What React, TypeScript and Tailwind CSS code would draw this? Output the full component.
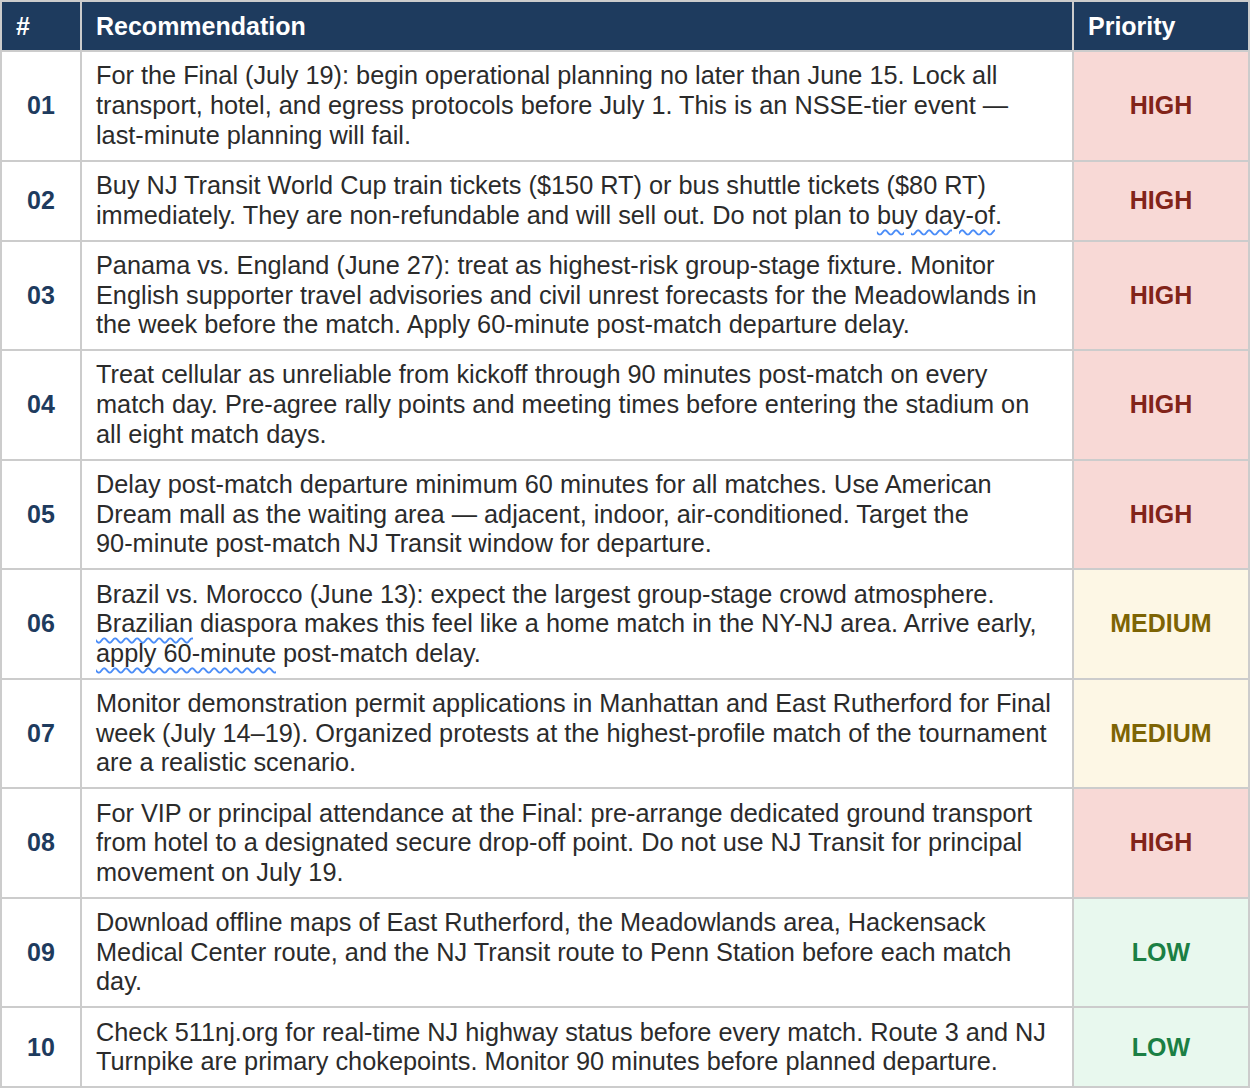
const rows: { n: string; text: React.ReactNode; p: "HIGH" | "MEDIUM" | "LOW" }[] = [
  {
    n: "01",
    text: "For the Final (July 19): begin operational planning no later than June 15. Lock all transport, hotel, and egress protocols before July 1. This is an NSSE-tier event — last-minute planning will fail.",
    p: "HIGH",
  },
  {
    n: "02",
    text: (
      <>
        Buy NJ Transit World Cup train tickets ($150 RT) or bus shuttle tickets ($80 RT) immediately. They are
        non-refundable and will sell out. Do not plan to <Squiggle>buy day-of</Squiggle>.
      </>
    ),
    p: "HIGH",
  },
  {
    n: "03",
    text: "Panama vs. England (June 27): treat as highest-risk group-stage fixture. Monitor English supporter travel advisories and civil unrest forecasts for the Meadowlands in the week before the match. Apply 60-minute post-match departure delay.",
    p: "HIGH",
  },
  {
    n: "04",
    text: "Treat cellular as unreliable from kickoff through 90 minutes post-match on every match day. Pre-agree rally points and meeting times before entering the stadium on all eight match days.",
    p: "HIGH",
  },
  {
    n: "05",
    text: (
      <>
        Delay post-match departure minimum 60 minutes for all matches. Use American Dream mall as the waiting area —
        adjacent, indoor, air-conditioned. Target the <span className="whitespace-nowrap">90-minute</span> post-match NJ
        Transit window for departure.
      </>
    ),
    p: "HIGH",
  },
  {
    n: "06",
    text: (
      <>
        Brazil vs. Morocco (June 13): expect the largest group-stage crowd atmosphere. <Squiggle>Brazilian</Squiggle>{" "}
        diaspora makes this feel like a home match in the NY-NJ area. Arrive early,{" "}
        <Squiggle>apply 60-minute</Squiggle> post-match delay.
      </>
    ),
    p: "MEDIUM",
  },
  {
    n: "07",
    text: "Monitor demonstration permit applications in Manhattan and East Rutherford for Final week (July 14–19). Organized protests at the highest-profile match of the tournament are a realistic scenario.",
    p: "MEDIUM",
  },
  {
    n: "08",
    text: "For VIP or principal attendance at the Final: pre-arrange dedicated ground transport from hotel to a designated secure drop-off point. Do not use NJ Transit for principal movement on July 19.",
    p: "HIGH",
  },
  {
    n: "09",
    text: "Download offline maps of East Rutherford, the Meadowlands area, Hackensack Medical Center route, and the NJ Transit route to Penn Station before each match day.",
    p: "LOW",
  },
  {
    n: "10",
    text: "Check 511nj.org for real-time NJ highway status before every match. Route 3 and NJ Turnpike are primary chokepoints. Monitor 90 minutes before planned departure.",
    p: "LOW",
  },
];

function Squiggle({ children }: { children: React.ReactNode }) {
  return (
    <span className="underline decoration-wavy decoration-[#4b8df8] decoration-[1.5px] underline-offset-[5px]">
      {children}
    </span>
  );
}

const priorityStyle = {
  HIGH: "bg-[#f8d9d6] text-[#822419]",
  MEDIUM: "bg-[#fdf7e5] text-[#7d6404]",
  LOW: "bg-[#e8f8ee] text-[#1b7f44]",
};

export default function App() {
  return (
    <div className="bg-white font-['Liberation_Sans',Arial,sans-serif]">
      <table className="w-[1248px] table-fixed border-collapse border-2 border-[#cccccc] text-[25px] leading-[29.6px]">
        <colgroup>
          <col className="w-[80px]" />
          <col className="w-[992px]" />
          <col className="w-[176px]" />
        </colgroup>
        <thead>
          <tr className="bg-[#1e3b5e] text-white">
            <th className="border-2 border-[#cccccc] px-[14px] pt-[10px] pb-[9px] text-left font-bold leading-[29px]">#</th>
            <th className="border-2 border-[#cccccc] px-[14px] pt-[10px] pb-[9px] text-left font-bold leading-[29px]">
              Recommendation
            </th>
            <th className="border-2 border-[#cccccc] px-[14px] pt-[10px] pb-[9px] text-left font-bold leading-[29px]">
              Priority
            </th>
          </tr>
        </thead>
        <tbody>
          {rows.map((r) => (
            <tr key={r.n}>
              <td className="border-2 border-[#cccccc] text-center align-middle font-bold text-[#1e3b5e]">{r.n}</td>
              <td className="border-2 border-[#cccccc] py-[9.4px] pl-[14px] pr-[14px] text-[25.3px] text-[#2b2b2b]">
                {r.text}
              </td>
              <td className={`border-2 border-[#cccccc] text-center align-middle font-bold ${priorityStyle[r.p]}`}>
                {r.p}
              </td>
            </tr>
          ))}
        </tbody>
      </table>
    </div>
  );
}
